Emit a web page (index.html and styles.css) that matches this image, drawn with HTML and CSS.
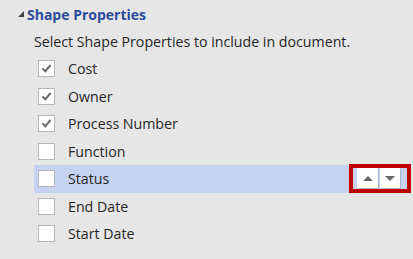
FILE: index.html
```html
<!DOCTYPE html>
<html lang="en">
<head>
    <meta charset="UTF-8">
    <title>Shape Properties</title>
    <link rel="stylesheet" href="styles.css">
</head>
<body>
    <div class="panel">
        <div class="section-head">
            <span class="toggle"></span>
            <h2>Shape Properties</h2>
        </div>
        <p class="hint">Select Shape Properties to include in document.</p>
        <ul class="props">
            <li><span class="box checked"></span>Cost</li>
            <li><span class="box checked"></span>Owner</li>
            <li><span class="box checked"></span>Process Number</li>
            <li><span class="box"></span>Function</li>
            <li class="selected">
                <span class="box"></span>Status
                <div class="movers">
                    <button class="mover"><span class="arrow up"></span></button>
                    <button class="mover"><span class="arrow down"></span></button>
                </div>
            </li>
            <li><span class="box"></span>End Date</li>
            <li><span class="box"></span>Start Date</li>
        </ul>
    </div>
</body>
</html>
```

FILE: styles.css
```css
body {
    margin: 0;
    background-color: #e6e6e6;
    font-family: "Open Sans", "Noto Sans", sans-serif;
    color: #262626;
}

.panel {
    padding: 3px 0 0 0;
}

.section-head {
    display: flex;
    align-items: center;
    height: 22px;
    padding-left: 18px;
}

.toggle {
    width: 0;
    height: 0;
    border-left: 6px solid transparent;
    border-bottom: 6px solid #444;
    margin-right: 3px;
}

h2 {
    margin: 0;
    font-size: 14px;
    font-weight: bold;
    color: #2b4c9c;
}

.hint {
    margin: 7px 0 0 34px;
    font-size: 14.2px;
    line-height: 20px;
}

.props {
    list-style-type: none;
    margin: 3px 0 0 0;
    padding: 0;
}

.props li {
    display: flex;
    align-items: center;
    height: 27.5px;
    margin-left: 34px;
    padding-left: 4px;
    font-size: 14.2px;
}

.props li.selected {
    background-color: #c5d3f1;
    margin-right: 6px;
}

.box {
    width: 15px;
    height: 15px;
    border: 1px solid #b7b7b7;
    background-color: #fff;
    margin-right: 13px;
    position: relative;
}

.box.checked::after {
    content: "";
    position: absolute;
    left: 5px;
    top: 2px;
    width: 3px;
    height: 7px;
    border-right: 2px solid #6a6a6a;
    border-bottom: 2px solid #6a6a6a;
    transform: rotate(40deg);
}

.movers {
    margin-left: auto;
    margin-right: -4px;
    display: flex;
    gap: 2px;
    padding: 0 7px 0 4px;
    border: 4px solid #c00000;
    height: 21px;
    align-items: flex-start;
}

.mover {
    width: 21px;
    height: 20px;
    padding: 0;
    border: none;
    background-color: #fff;
    box-shadow: 1px 1px 0 #a9b4cc;
    display: flex;
    align-items: center;
    justify-content: center;
}

.mover + .mover {
    width: 20px;
}

.arrow {
    width: 0;
    height: 0;
    border-left: 5.5px solid transparent;
    border-right: 5.5px solid transparent;
}

.arrow.up {
    border-bottom: 5px solid #666;
}

.arrow.down {
    border-top: 5px solid #666;
}
```
